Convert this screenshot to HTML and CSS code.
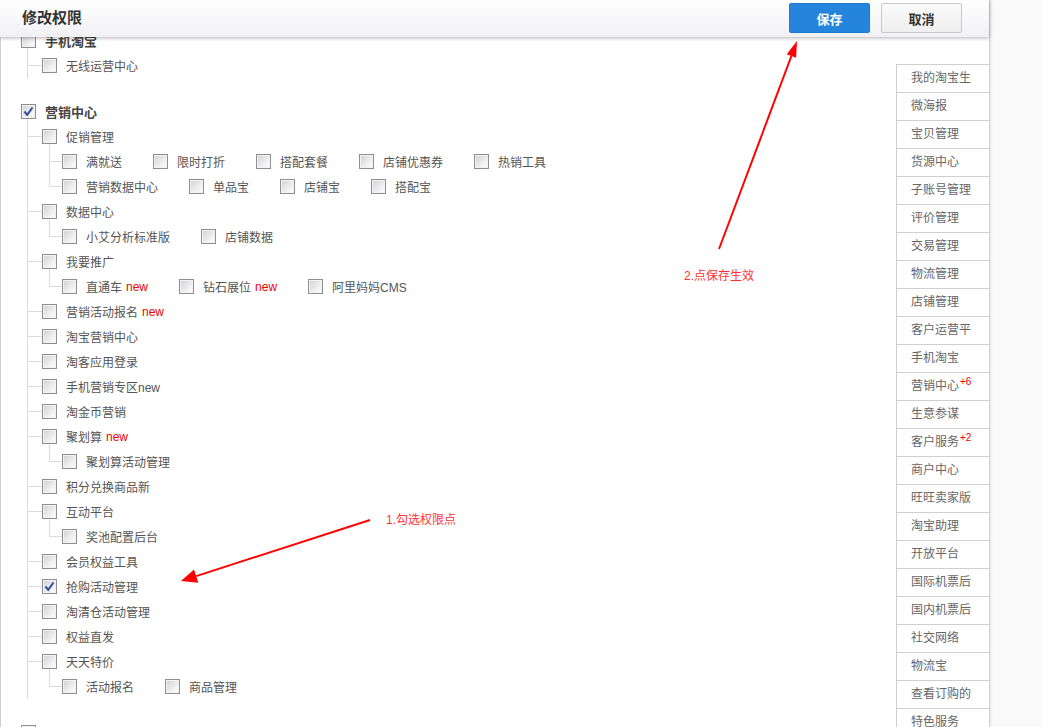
FILE: index.html
```html
<!DOCTYPE html>
<html lang="zh-CN">
<head>
    <meta charset="UTF-8">
    <title>修改权限</title>
    <link rel="stylesheet" href="styles.css">
</head>
<body>
    <div class="panel">
        <div class="head">
            <h1>修改权限</h1>
            <div class="btns">
                <button class="btn save">保存</button>
                <button class="btn">取消</button>
            </div>
        </div>

        <div class="main">
            <div class="tree">
                <div class="grp">
                    <div class="row top"><span class="cb"></span><b>手机淘宝</b></div>
                    <ul class="l1">
                        <li><div class="row"><i class="conn"></i><span class="cb"></span>无线运营中心</div></li>
                    </ul>
                </div>

                <div class="grp">
                    <div class="row top"><span class="cb on"><svg viewBox="0 0 13 13"><path d="M2.5 6.5 L5.2 9.8 L10.5 2.5"/></svg></span><b>营销中心</b></div>
                    <ul class="l1">
                        <li>
                            <div class="row"><i class="conn"></i><span class="cb"></span>促销管理</div>
                            <ul class="l2">
                                <li class="row"><i class="conn2"></i>
                                    <span class="item"><span class="cb"></span>满就送</span>
                                    <span class="item"><span class="cb"></span>限时打折</span>
                                    <span class="item"><span class="cb"></span>搭配套餐</span>
                                    <span class="item"><span class="cb"></span>店铺优惠券</span>
                                    <span class="item"><span class="cb"></span>热销工具</span>
                                </li>
                                <li class="row"><i class="conn2 end"></i>
                                    <span class="item"><span class="cb"></span>营销数据中心</span>
                                    <span class="item"><span class="cb"></span>单品宝</span>
                                    <span class="item"><span class="cb"></span>店铺宝</span>
                                    <span class="item"><span class="cb"></span>搭配宝</span>
                                </li>
                            </ul>
                        </li>
                        <li>
                            <div class="row"><i class="conn"></i><span class="cb"></span>数据中心</div>
                            <ul class="l2">
                                <li class="row"><i class="conn2 end"></i>
                                    <span class="item"><span class="cb"></span>小艾分析标准版</span>
                                    <span class="item"><span class="cb"></span>店铺数据</span>
                                </li>
                            </ul>
                        </li>
                        <li>
                            <div class="row"><i class="conn"></i><span class="cb"></span>我要推广</div>
                            <ul class="l2">
                                <li class="row"><i class="conn2 end"></i>
                                    <span class="item"><span class="cb"></span>直通车<em>new</em></span>
                                    <span class="item"><span class="cb"></span>钻石展位<em>new</em></span>
                                    <span class="item"><span class="cb"></span>阿里妈妈CMS</span>
                                </li>
                            </ul>
                        </li>
                        <li><div class="row"><i class="conn"></i><span class="cb"></span>营销活动报名<em>new</em></div></li>
                        <li><div class="row"><i class="conn"></i><span class="cb"></span>淘宝营销中心</div></li>
                        <li><div class="row"><i class="conn"></i><span class="cb"></span>淘客应用登录</div></li>
                        <li><div class="row"><i class="conn"></i><span class="cb"></span>手机营销专区new</div></li>
                        <li><div class="row"><i class="conn"></i><span class="cb"></span>淘金币营销</div></li>
                        <li>
                            <div class="row"><i class="conn"></i><span class="cb"></span>聚划算<em>new</em></div>
                            <ul class="l2">
                                <li class="row"><i class="conn2 end"></i>
                                    <span class="item"><span class="cb"></span>聚划算活动管理</span>
                                </li>
                            </ul>
                        </li>
                        <li><div class="row"><i class="conn"></i><span class="cb"></span>积分兑换商品新</div></li>
                        <li>
                            <div class="row"><i class="conn"></i><span class="cb"></span>互动平台</div>
                            <ul class="l2">
                                <li class="row"><i class="conn2 end"></i>
                                    <span class="item"><span class="cb"></span>奖池配置后台</span>
                                </li>
                            </ul>
                        </li>
                        <li><div class="row"><i class="conn"></i><span class="cb"></span>会员权益工具</div></li>
                        <li><div class="row"><i class="conn"></i><span class="cb on"><svg viewBox="0 0 13 13"><path d="M2.5 6.5 L5.2 9.8 L10.5 2.5"/></svg></span>抢购活动管理</div></li>
                        <li><div class="row"><i class="conn"></i><span class="cb"></span>淘清仓活动管理</div></li>
                        <li><div class="row"><i class="conn"></i><span class="cb"></span>权益直发</div></li>
                        <li>
                            <div class="row"><i class="conn"></i><span class="cb"></span>天天特价</div>
                            <ul class="l2">
                                <li class="row"><i class="conn2 end"></i>
                                    <span class="item"><span class="cb"></span>活动报名</span>
                                    <span class="item"><span class="cb"></span>商品管理</span>
                                </li>
                            </ul>
                        </li>
                    </ul>
                </div>

                <div class="grp">
                    <div class="row top"><span class="cb"></span></div>
                </div>
            </div>

            <ul class="side">
                <li>我的淘宝生</li>
                <li>微海报</li>
                <li>宝贝管理</li>
                <li>货源中心</li>
                <li>子账号管理</li>
                <li>评价管理</li>
                <li>交易管理</li>
                <li>物流管理</li>
                <li>店铺管理</li>
                <li>客户运营平</li>
                <li>手机淘宝</li>
                <li>营销中心<sup>+6</sup></li>
                <li>生意参谋</li>
                <li>客户服务<sup>+2</sup></li>
                <li>商户中心</li>
                <li>旺旺卖家版</li>
                <li>淘宝助理</li>
                <li>开放平台</li>
                <li>国际机票后</li>
                <li>国内机票后</li>
                <li>社交网络</li>
                <li>物流宝</li>
                <li>查看订购的</li>
                <li>特色服务</li>
            </ul>
        </div>
    </div>

    <!-- annotation arrows drawn over the screenshot -->
    <svg class="notes" width="1042" height="727" viewBox="0 0 1042 727">
        <line x1="719" y1="249" x2="791.4" y2="56"/>
        <polygon points="797,41 796.1,57.8 786.7,54.2"/>
        <text x="684" y="280">2.点保存生效</text>

        <line x1="370" y1="520" x2="196.2" y2="576.1"/>
        <polygon points="181,581 198.3,582.8 194,569.4"/>
        <text x="386" y="524">1.勾选权限点</text>
    </svg>
</body>
</html>
```

FILE: styles.css
```css
html, body {
    margin: 0;
    height: 100%;
    overflow: hidden;
}
body {
    font-family: "Liberation Sans", "Noto Sans CJK SC", sans-serif;
    font-size: 12px;
    color: #555;
    background-color: #fafafa;
    position: relative;
}
ul {
    list-style: none;
    margin: 0;
    padding: 0;
}
.panel {
    position: relative;
    width: 990px;
    height: 100%;
    box-sizing: border-box;
    background: #fff;
    border-left: 1px solid #cfcfcf;
    border-right: 1px solid #cfcfcf;
    box-shadow: 1px 0 3px rgba(0,0,0,0.08);
}
.head {
    position: absolute;
    top: 0;
    left: -1px;
    z-index: 2;
    width: 989px;
    height: 37px;
    box-sizing: border-box;
    padding: 3px 27px 0 22px;
    display: flex;
    align-items: flex-start;
    justify-content: space-between;
    background: linear-gradient(#ffffff, #f1f1f4);
    box-shadow: 0 1px 4px rgba(0,0,0,0.3);
}
.head h1 {
    margin: 0;
    font-size: 15px;
    line-height: 30px;
    color: #333;
    font-weight: bold;
}
.btns {
    display: flex;
    gap: 11px;
}
.btn {
    width: 81px;
    height: 30px;
    font-family: inherit;
    font-size: 13px;
    font-weight: bold;
    color: #333;
    background: linear-gradient(#fafafa, #efefef);
    border: 1px solid #c8c8c8;
    border-radius: 2px;
}
.btn.save {
    color: #fff;
    background: #2584dc;
    border-color: #1f7bd2;
}
.main {
    display: flex;
    align-items: flex-start;
}
.tree {
    flex: 1;
    padding: 28px 0 0 20px;
}
.grp + .grp {
    margin-top: 21px;
}
.row {
    display: flex;
    align-items: center;
    height: 25px;
    white-space: nowrap;
}
.top b {
    font-size: 13px;
    color: #444;
}
.cb {
    flex: none;
    width: 15px;
    height: 15px;
    box-sizing: border-box;
    margin-right: 9px;
    border: 1px solid #8e8e8e;
    background: linear-gradient(135deg, #d0d0d3 0%, #ececee 55%, #ffffff 100%);
    box-shadow: inset 0 0 0 1px #f3f3f3;
}
.cb svg {
    display: block;
    width: 13px;
    height: 13px;
}
.cb svg path {
    fill: none;
    stroke: #2d4f9a;
    stroke-width: 2;
}
.l1 {
    margin: -5px 0 0 6px;
    padding-top: 5px;
    border-left: 1px solid #dcdcdc;
}
.conn {
    flex: none;
    width: 14px;
    height: 1px;
    background: #dcdcdc;
}
.l2 {
    margin: -5px 0 0 21px;
    padding-top: 5px;
    background: linear-gradient(#dcdcdc, #dcdcdc) 0 0 / 1px 5px no-repeat;
}
.conn2 {
    flex: none;
    align-self: stretch;
    width: 13px;
    background:
        linear-gradient(#dcdcdc, #dcdcdc) 0 0 / 1px 100% no-repeat,
        linear-gradient(#dcdcdc, #dcdcdc) 0 50% / 100% 1px no-repeat;
}
.conn2.end {
    background:
        linear-gradient(#dcdcdc, #dcdcdc) 0 0 / 1px 13px no-repeat,
        linear-gradient(#dcdcdc, #dcdcdc) 0 12px / 100% 1px no-repeat;
}
.item {
    display: flex;
    align-items: center;
    margin-right: 31px;
}
em {
    font-style: normal;
    color: #e00;
    margin-left: 4px;
}
.side {
    flex: none;
    width: 93px;
    margin-top: 64px;
    border-top: 1px solid #cfcfcf;
    border-left: 1px solid #cfcfcf;
    box-sizing: border-box;
}
.side li {
    height: 27px;
    line-height: 27px;
    padding-left: 14px;
    border-bottom: 1px solid #cfcfcf;
    color: #666;
    white-space: nowrap;
}
.side sup {
    color: #e00;
    font-size: 10px;
    line-height: 0;
    vertical-align: 5px;
    margin-left: 1px;
}
.notes {
    position: absolute;
    top: 0;
    left: 0;
    pointer-events: none;
}
.notes line {
    stroke: #f00;
    stroke-width: 2;
}
.notes polygon {
    fill: #f00;
}
.notes text {
    font-family: "Liberation Sans", "Noto Sans CJK SC", sans-serif;
    font-size: 12px;
    fill: #f33;
}
```
